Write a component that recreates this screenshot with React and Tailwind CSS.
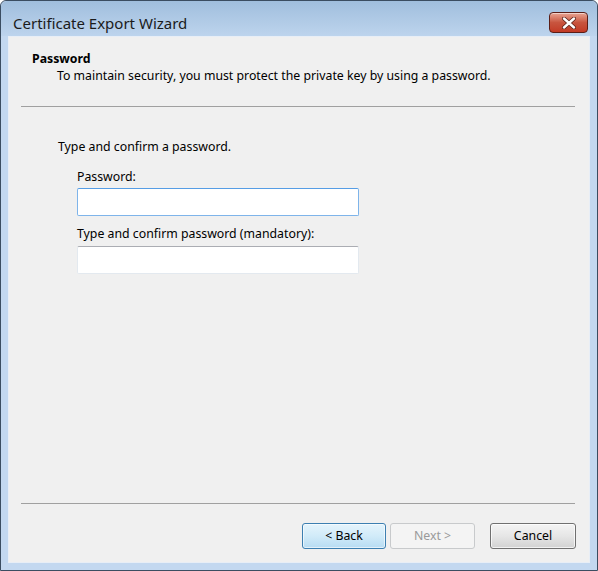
import { useState } from "react";

const font = { fontFamily: '"Noto Sans", "Segoe UI", sans-serif' };

const CloseButton = () => (
    <button className="mt-[11px] w-[39px] h-[21px] rounded-[4px] border border-[#5a1e17] bg-gradient-to-b from-[#e8a493] via-[#c8553f] to-[#c23a25] flex items-center justify-center shadow-[inset_0_1px_0_rgba(255,255,255,0.5)]">
        <svg width="14" height="12" viewBox="0 0 14 12">
            <path
                d="M2 1.5 L12 10.5 M12 1.5 L2 10.5"
                stroke="#5a2218"
                strokeWidth="4"
                strokeLinecap="round"
            />
            <path
                d="M2 1.5 L12 10.5 M12 1.5 L2 10.5"
                stroke="#ffffff"
                strokeWidth="2.4"
                strokeLinecap="round"
            />
        </svg>
    </button>
);

const App = () => {
    const [pw, setPw] = useState("");
    const [pw2, setPw2] = useState("");

    return (
        <div
            className="w-[598px] h-[571px] bg-[#c3d8f0] border border-[#3b4d61] rounded-t-[6px] flex flex-col text-[12.3px] text-black"
            style={font}
        >
            {/* Title bar */}
            <div className="h-[35px] shrink-0 rounded-t-[6px] bg-gradient-to-b from-[#a0bedd] to-[#bdd4ed] flex items-start justify-between pl-[12px] pr-[9px]">
                <span className="mt-[12px] text-[15px] leading-[20px] text-[#1b1b1b]">Certificate Export Wizard</span>
                <CloseButton />
            </div>

            {/* Client area */}
            <div className="flex-1 px-[7px] pb-[7px]">
                <div className="h-full bg-[#f0f0f0] border border-[#e8eef6] flex flex-col">
                    {/* Header */}
                    <div className="px-[23px] pt-[14px]">
                        <div className="font-bold leading-[16px]">Password</div>
                        <div className="pl-[25px] leading-[16px] mt-[1px]">
                            To maintain security, you must protect the private key by using a password.
                        </div>
                    </div>
                    <div className="ml-[12px] mr-[14px] mt-[22px] h-[2px] border-t border-[#a0a0a0] border-b-white" />

                    {/* Body */}
                    <div className="flex-1 pl-[49px] pt-[31px]">
                        <div className="leading-[16px]">Type and confirm a password.</div>
                        <div className="pl-[19px] mt-[14px] flex flex-col">
                            <label className="leading-[16px]">Password:</label>
                            <input
                                type="password"
                                value={pw}
                                onChange={(e) => setPw(e.target.value)}
                                className="mt-[3px] w-[282px] h-[28px] bg-white border border-[#7eb4ea] border-t-[#569de5] rounded-[2px] outline-none px-[4px]"
                            />
                            <label className="leading-[16px] mt-[10px]">
                                Type and confirm password (mandatory):
                            </label>
                            <input
                                type="password"
                                value={pw2}
                                onChange={(e) => setPw2(e.target.value)}
                                className="mt-[4px] w-[282px] h-[28px] bg-white border border-[#e3e9ef] border-t-[#abadb3] rounded-[2px] outline-none px-[4px]"
                            />
                        </div>
                    </div>

                    {/* Footer */}
                    <div className="ml-[12px] mr-[14px] h-[2px] border-t border-[#a0a0a0] border-b-white" />
                    <div className="flex justify-end items-center pr-[13px] pt-[18px] pb-[13px]">
                        <button className="w-[84px] h-[26px] rounded-[3px] border border-[#3c7fb1] bg-gradient-to-b from-[#e5f4fc] via-[#d1ebf9] to-[#b7dcf3] shadow-[inset_0_0_0_1px_rgba(255,255,255,0.6)]">
                            &lt; Back
                        </button>
                        <button
                            disabled
                            className="ml-[4px] w-[85px] h-[26px] rounded-[3px] border border-[#c8cacc] bg-[#f4f4f4] text-[#9a9a9a]"
                        >
                            Next &gt;
                        </button>
                        <button className="ml-[15px] w-[86px] h-[26px] rounded-[3px] border border-[#707070] bg-gradient-to-b from-[#f4f4f4] via-[#e6e6e6] to-[#d2d2d2] shadow-[inset_0_0_0_1px_rgba(255,255,255,0.7)]">
                            Cancel
                        </button>
                    </div>
                </div>
            </div>
        </div>
    );
};

export default App;
